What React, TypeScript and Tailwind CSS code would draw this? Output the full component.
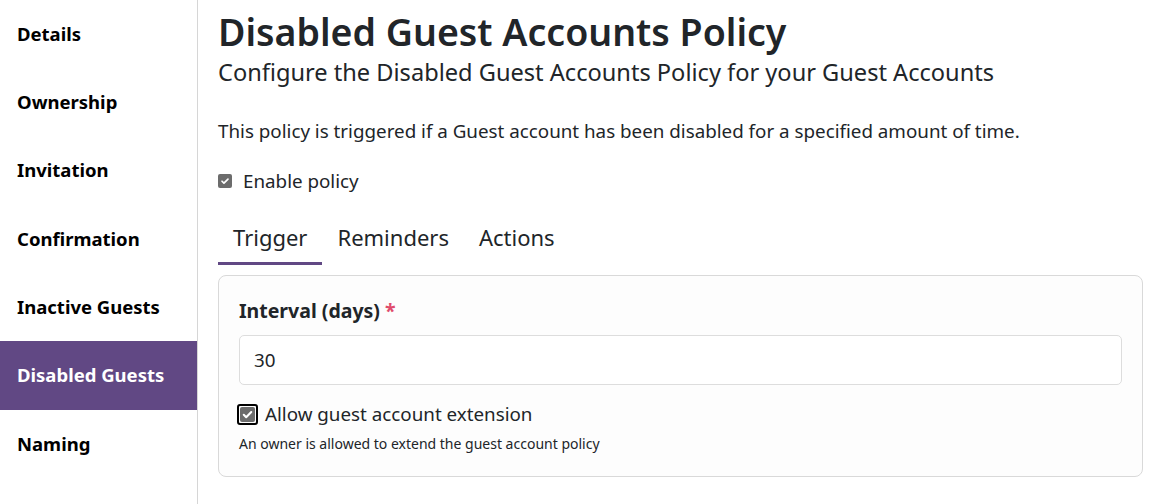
const navItems = ["Details", "Ownership", "Invitation", "Confirmation", "Inactive Guests", "Disabled Guests", "Naming"];
const tabs = ["Trigger", "Reminders", "Actions"];

function CheckIcon() {
  return (
    <svg viewBox="0 0 16 16" className="w-full h-full">
      <path d="M4 8.3l2.6 2.6L12 5.4" fill="none" stroke="#fff" strokeWidth="2.2" strokeLinecap="round" strokeLinejoin="round" />
    </svg>
  );
}

export default function App() {
  return (
    <div className="flex h-[504px] w-[1161px] bg-white text-[#212529] overflow-hidden" style={{ fontFamily: '"Noto Sans", sans-serif' }}>
      <nav className="w-[198px] shrink-0 border-r border-[#d6d6d6]">
        {navItems.map((item) => (
          <div
            key={item}
            className={`h-[68.3px] flex items-center pl-[17px] pb-[1px] text-[18.5px] font-bold ${item === "Disabled Guests" ? "bg-[#614884] text-white" : "text-black"}`}
          >
            {item}
          </div>
        ))}
      </nav>

      <main className="flex-1 pl-[20px] pr-[18px]">
        <h1 className="text-[37.5px] font-semibold leading-[48px] mt-[8px]">Disabled Guest Accounts Policy</h1>
        <h2 className="text-[23.6px] leading-[30px] mt-[1px]">Configure the Disabled Guest Accounts Policy for your Guest Accounts</h2>
        <p className="text-[18.8px] leading-[24px] mt-[32px]">This policy is triggered if a Guest account has been disabled for a specified amount of time.</p>

        <label className="flex items-center gap-[11px] mt-[24px] text-[18.8px]">
          <span className="w-[14px] h-[14px] rounded-[2px] bg-[#6c6c6c] p-[1px]">
            <CheckIcon />
          </span>
          Enable policy
        </label>

        <div className="flex mt-[22px] text-[22px]">
          {tabs.map((t) => (
            <div key={t} className={`px-[15px] pb-[8px] pt-[4px] ${t === "Trigger" ? "border-b-[3px] border-[#614884]" : "border-b-[3px] border-transparent"}`}>
              {t}
            </div>
          ))}
        </div>

        <div className="mt-[10px] border border-[#d9d9d9] rounded-[8px] bg-[#fdfdfd] px-[20px] pt-[20px] pb-[22px]">
          <div className="text-[19.5px] font-bold">
            Interval (days) <span className="text-[#e04b6c]">*</span>
          </div>
          <div className="mt-[10px] h-[50px] border border-[#dddddd] rounded-[5px] bg-white flex items-center px-[14px] text-[18.8px]">30</div>
          <label className="flex items-center gap-[7px] mt-[15px] ml-[-2px] text-[18.8px]">
            <span className="w-[21px] h-[21px] rounded-[3px] border-[2px] border-black p-[1px]">
              <span className="block w-full h-full rounded-[2px] bg-[#6c6c6c]">
                <CheckIcon />
              </span>
            </span>
            Allow guest account extension
          </label>
          <div className="text-[14px] mt-[4px]">An owner is allowed to extend the guest account policy</div>
        </div>
      </main>
    </div>
  );
}
